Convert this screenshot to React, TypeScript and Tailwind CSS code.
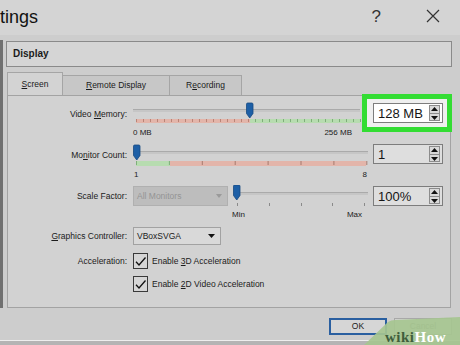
import React from 'react';

const Thumb = ({ x, y }: { x: number; y: number }) => (
  <path
    transform={`translate(${x} ${y})`}
    d="M0.5 1.2 Q0.5 0 1.7 0 H5.8 Q7 0 7 1.2 V10.5 L3.75 15 L0.5 10.5 Z"
    fill="#1d5fa6"
    stroke="#164a82"
    strokeWidth="0.8"
  />
);

const Groove = ({ x, y, w }: { x: number; y: number; w: number }) => (
  <g>
    <rect x={x} y={y} width={w} height={3} fill="#c6c6c6" />
    <rect x={x} y={y} width={w} height={1} fill="#aaaaaa" />
  </g>
);

const memTicks = Array.from({ length: 33 }, (_, i) => 5 + i * 7);
const monTicks = Array.from({ length: 8 }, (_, i) => 5 + i * 32.9);
const scaleTicks = [6, 38, 70, 101, 133];

const Spin = ({ value, white }: { value: string; white?: boolean }) => (
  <div
    className={`relative z-10 w-[70px] h-[20px] border border-[#7d7d7d] flex items-center ${
      white ? 'bg-white' : 'bg-[#dedede]'
    }`}
  >
    <span className="pl-[4px] text-[13px] leading-none text-[#151515]">{value}</span>
    <div className="ml-auto mr-[2px] w-[11px] h-[16px] border border-[#8c8c8c] bg-[#d9d9d9] flex flex-col items-center justify-center gap-[2px]">
      <svg width="7" height="4" viewBox="0 0 7 4">
        <path d="M0 4 L3.5 0 L7 4 Z" fill="#111" />
      </svg>
      <div className="w-[9px] h-px bg-[#8c8c8c]" />
      <svg width="7" height="4" viewBox="0 0 7 4">
        <path d="M0 0 L3.5 4 L7 0 Z" fill="#111" />
      </svg>
    </div>
  </div>
);

const Check = () => (
  <div className="w-[15px] h-[16px] border border-[#3a3a3a] bg-[#d6d6d6] flex items-center justify-center">
    <svg width="13" height="13" viewBox="0 0 13 13">
      <path d="M2 6.8 L5 10 L11.5 2.5" fill="none" stroke="#111" strokeWidth="1.3" />
    </svg>
  </div>
);

const Label = ({ children, pt }: { children: React.ReactNode; pt: string }) => (
  <div className={`w-[119px] shrink-0 text-right leading-[10px] ${pt}`}>{children}</div>
);

export default function App() {
  return (
    <div className="relative w-[460px] h-[345px] overflow-hidden bg-[#cdcdcd] flex flex-col font-['Liberation_Sans',Arial,sans-serif] text-[8.5px] text-[#1b1b1b]">
      {/* title bar */}
      <div className="h-[35px] shrink-0 bg-[#d4d4d4] flex items-center">
        <span className="text-[18px] leading-none text-[#111] -mt-[2px]">tings</span>
        <span className="ml-auto mr-[45px] text-[17px] leading-none text-[#333] -mt-[3px]">?</span>
        <svg className="mr-[20px] -mt-[3px]" width="14" height="14" viewBox="0 0 14 14">
          <path d="M1 1 L13 13 M13 1 L1 13" stroke="#333" strokeWidth="1.2" />
        </svg>
      </div>

      {/* body */}
      <div className="h-[305px] shrink-0 flex">
        <div className="w-[3px] h-[268px] mt-[5px] bg-[#707070]" />
        <div className="ml-[3px] w-[446px] pt-[6px] flex flex-col">
          <div className="h-[26px] border border-[#8a8a8a] bg-[#d5d5d5] flex items-center pl-[6px]">
            <span className="font-bold text-[10px] leading-none">Display</span>
          </div>

          {/* tabs */}
          <div className="mt-[5px] ml-[1px] h-[23px] flex items-end">
            <div className="w-[56px] h-[23px] border border-b-0 border-[#a5a5a5] bg-[#d3d3d3] flex items-center justify-center">
              <u>S</u>creen
            </div>
            <div className="w-[107px] h-[20px] border-t border-r border-[#a5a5a5] bg-[#c7c7c7] flex items-center justify-center">
              <span><u>R</u>emote Display</span>
            </div>
            <div className="w-[72px] h-[20px] border-t border-r border-[#a5a5a5] bg-[#c7c7c7] flex items-center justify-center">
              <span>R<u>e</u>cording</span>
            </div>
          </div>

          {/* panel */}
          <div className="ml-[1px] w-[444px] h-[213px] border border-[#a3a3a3] bg-[#d2d2d2] flex flex-col">
            {/* video memory */}
            <div className="flex mt-[5px]">
              <Label pt="pt-[8px]">
                Video <u>M</u>emory:
              </Label>
              <div className="ml-[4px] w-[242px] flex flex-col">
                <svg width="232" height="26" viewBox="0 0 232 26">
                  <Groove x={2} y={8} w={227} />
                  <rect x={5} y={18} width={114} height={4} fill="#e3b5aa" />
                  <rect x={119} y={18} width={110} height={4} fill="#b7dcb0" />
                  {memTicks.map((t) => (
                    <rect key={t} x={t} y={18} width={1} height={3} fill={t < 119 ? '#b98477' : '#7fae7a'} />
                  ))}
                  <Thumb x={115} y={2} />
                </svg>
                <div className="flex text-[8px] leading-[9px] mt-[1px] pl-[2px] pr-[21px]">
                  <span>0 MB</span>
                  <span className="ml-auto">256 MB</span>
                </div>
              </div>
              <div className="relative mt-[2px]">
                <div className="absolute left-[-11px] top-[-9px] w-[90px] h-[38px] border-[5px] border-[#33dd33] bg-[#efefef]" />
                <Spin value="128 MB" white />
              </div>
            </div>

            {/* monitor count */}
            <div className="flex mt-[7px]">
              <Label pt="pt-[6px]">
                Mo<u>n</u>itor Count:
              </Label>
              <div className="ml-[4px] w-[242px] flex flex-col">
                <svg width="240" height="24" viewBox="0 0 240 24">
                  <Groove x={2} y={7} w={235} />
                  <rect x={5} y={17} width={34} height={5} fill="#b7dcb0" />
                  <rect x={39} y={17} width={196} height={5} fill="#e3b5aa" />
                  {monTicks.map((t) => (
                    <rect key={t} x={t} y={17} width={1} height={4} fill={t < 39 ? '#7fae7a' : '#a87b6e'} />
                  ))}
                  <Thumb x={2} y={1} />
                </svg>
                <div className="flex text-[8px] leading-[9px] mt-[2px] pl-[3px] pr-[6px]">
                  <span>1</span>
                  <span className="ml-auto">8</span>
                </div>
              </div>
              <div className="mt-0">
                <Spin value="1" />
              </div>
            </div>

            {/* scale factor */}
            <div className="flex mt-[6px]">
              <Label pt="pt-[6px]">Scale Factor:</Label>
              <div className="ml-[4px] w-[242px] flex">
                <div className="ml-[2px] mt-[1px] w-[95px] h-[20px] bg-[#bdbdbd] border border-[#b0b0b0] flex items-center pl-[3px] text-[#949494]">
                  All Monitors
                  <svg className="ml-auto mr-[5px]" width="6" height="4" viewBox="0 0 6 4">
                    <path d="M0 0 L3 4 L6 0 Z" fill="#9a9a9a" />
                  </svg>
                </div>
                <div className="ml-[3px] flex flex-col">
                  <svg width="140" height="22" viewBox="0 0 140 22">
                    <Groove x={8} y={7} w={129} />
                    {scaleTicks.map((t) => (
                      <rect key={t} x={t} y={18} width={1} height={3} fill="#8a8a8a" />
                    ))}
                    <Thumb x={2} y={0} />
                  </svg>
                  <div className="flex text-[8px] leading-[9px] mt-[3px] pl-[1px] pr-[9px]">
                    <span>Min</span>
                    <span className="ml-auto">Max</span>
                  </div>
                </div>
              </div>
              <div className="mt-[1px]">
                <Spin value="100%" />
              </div>
            </div>

            {/* graphics controller */}
            <div className="flex mt-[8px]">
              <Label pt="pt-[4px]">
                <u>G</u>raphics Controller:
              </Label>
              <div className="ml-[6px] w-[88px] h-[18px] bg-[#d9d9d9] border border-[#a2a2a2] flex items-center pl-[3px]">
                VBoxSVGA
                <svg className="ml-auto mr-[5px]" width="7" height="4" viewBox="0 0 7 4">
                  <path d="M0 0 L3.5 4 L7 0 Z" fill="#111" />
                </svg>
              </div>
            </div>

            {/* acceleration */}
            <div className="flex mt-[8px]">
              <Label pt="pt-[3px]">Acceleration:</Label>
              <div className="ml-[6px] flex items-center gap-[4px]">
                <Check />
                <span>
                  Enable <u>3</u>D Acceleration
                </span>
              </div>
            </div>
            <div className="flex mt-[7px]">
              <div className="w-[119px] shrink-0" />
              <div className="ml-[6px] flex items-center gap-[4px]">
                <Check />
                <span>
                  Enable <u>2</u>D Video Acceleration
                </span>
              </div>
            </div>
          </div>

          {/* buttons */}
          <div className="mt-[10px] flex justify-end gap-[7px]">
            <div className="w-[58px] h-[17px] border-2 border-[#2a5fa0] bg-[#d6d6d6] flex items-center justify-center leading-none">
              OK
            </div>
            <div className="w-[58px] h-[17px] border border-[#a8a8a8] bg-[#d2d2d2] flex items-start justify-center pt-[3px] leading-none text-[#777]">
              Cancel
            </div>
          </div>
        </div>
      </div>
      <div className="h-px shrink-0 bg-[#eeeeee]" />
      <div className="flex-1 bg-[#b4b4b4]" />

      {/* wikiHow watermark */}
      <div className="absolute right-0 bottom-0 w-[96px] h-[28px]">
        <svg className="absolute inset-0" width="96" height="28" viewBox="0 0 96 28">
          <path d="M0 28 L24 5 Q27 3 31 3 L96 0 V28 Z" fill="#a6c690" fillOpacity="0.92" />
        </svg>
        <div className="absolute left-[21px] top-[13px] font-['Liberation_Serif',serif] font-bold text-[15px] leading-none tracking-[0.5px]">
          <span className="text-[#3f5e3c]">wiki</span>
          <span className="text-white">How</span>
        </div>
      </div>
    </div>
  );
}
